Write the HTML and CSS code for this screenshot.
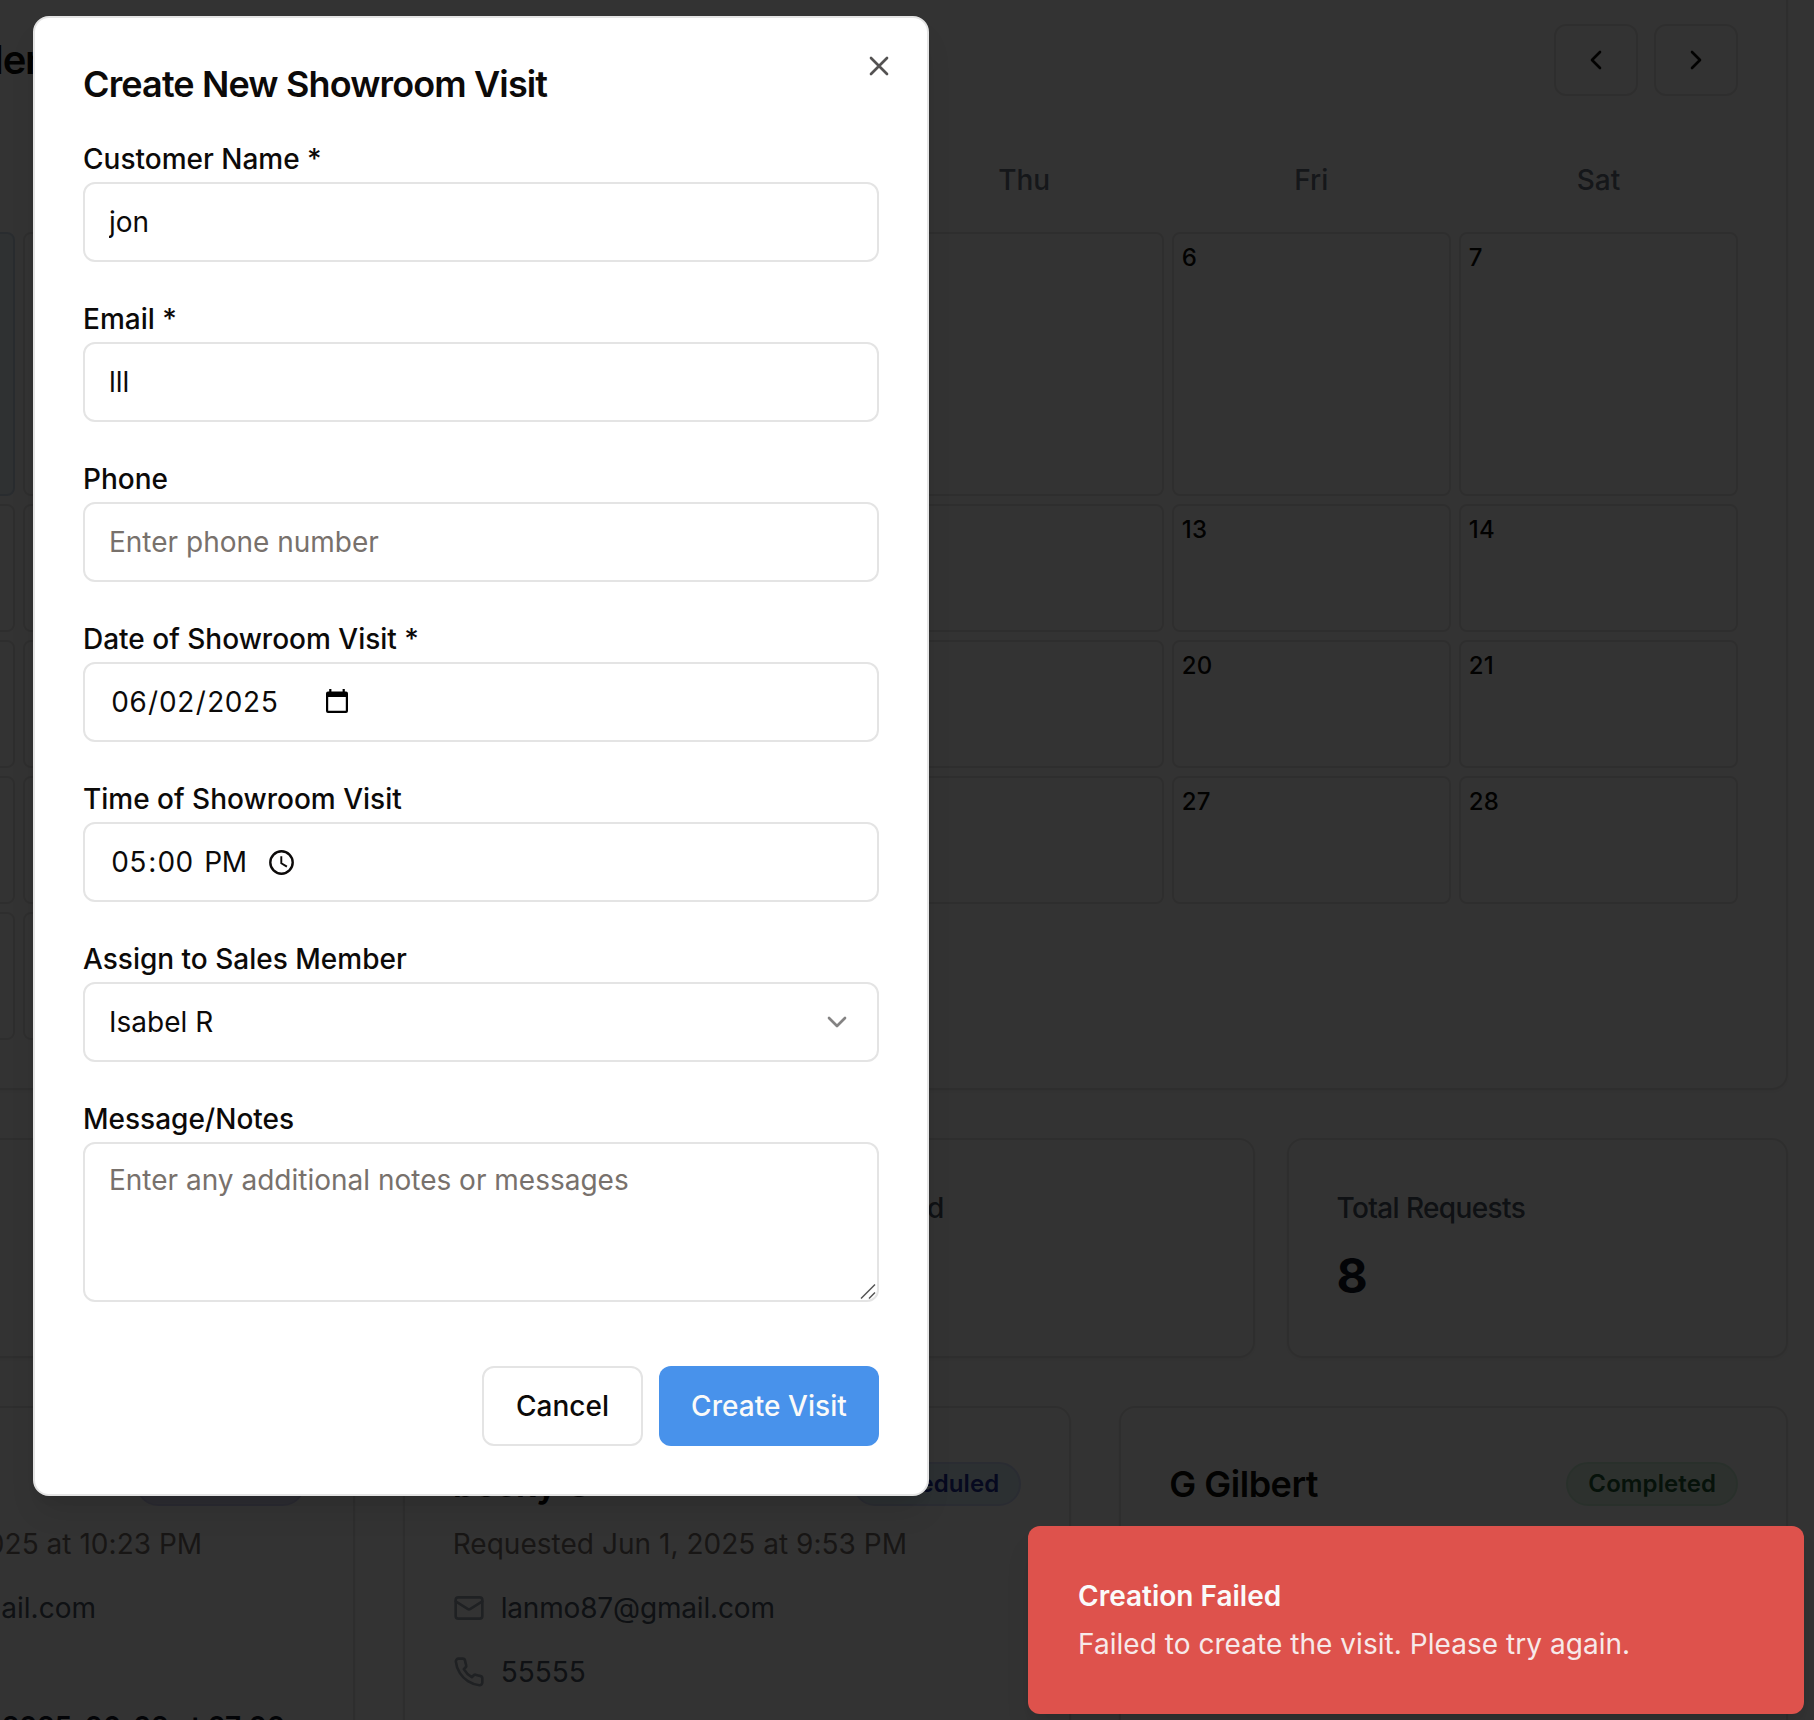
FILE: index.html
```html
<!DOCTYPE html>
<html lang="en">
<head>
<meta charset="utf-8">
<title>Showroom Visits</title>
<link rel="stylesheet" href="styles.css">
</head>
<body>
<svg class="sprite" aria-hidden="true">
  <symbol id="i-mail" viewBox="0 0 24 24"><rect width="20" height="16" x="2" y="4" rx="2"/><path d="m22 7-8.97 5.7a1.94 1.94 0 0 1-2.06 0L2 7"/></symbol>
  <symbol id="i-phone" viewBox="0 0 24 24"><path d="M22 16.92v3a2 2 0 0 1-2.18 2 19.79 19.79 0 0 1-8.63-3.07 19.5 19.5 0 0 1-6-6 19.79 19.79 0 0 1-3.07-8.67A2 2 0 0 1 4.11 2h3a2 2 0 0 1 2 1.72 12.84 12.84 0 0 0 .7 2.81 2 2 0 0 1-.45 2.11L8.09 9.91a16 16 0 0 0 6 6l1.27-1.27a2 2 0 0 1 2.11-.45 12.84 12.84 0 0 0 2.81.7A2 2 0 0 1 22 16.92z"/></symbol>
  <symbol id="i-left" viewBox="0 0 24 24"><path d="m15 18-6-6 6-6"/></symbol>
  <symbol id="i-right" viewBox="0 0 24 24"><path d="m9 18 6-6-6-6"/></symbol>
  <symbol id="i-down" viewBox="0 0 24 24"><path d="m6 9 6 6 6-6"/></symbol>
  <symbol id="i-x" viewBox="0 0 24 24"><path d="M18 6 6 18M6 6l12 12"/></symbol>
</svg>

<main class="page">
  <section class="card calendar">
    <header class="calendar-head">
      <h2 class="calendar-title">Showroom Calendar</h2>
      <div class="calendar-nav">
        <button class="nav-btn"><svg class="icon"><use href="#i-left"/></svg></button>
        <button class="nav-btn"><svg class="icon"><use href="#i-right"/></svg></button>
      </div>
    </header>
    <div class="week">
      <span>Sun</span><span>Mon</span><span>Tue</span><span>Wed</span><span>Thu</span><span>Fri</span><span>Sat</span>
    </div>
    <div class="days">
      <div class="day today">1</div><div class="day">2</div><div class="day">3</div><div class="day">4</div><div class="day">5</div><div class="day">6</div><div class="day">7</div>
      <div class="day">8</div><div class="day">9</div><div class="day">10</div><div class="day">11</div><div class="day">12</div><div class="day">13</div><div class="day">14</div>
      <div class="day">15</div><div class="day">16</div><div class="day">17</div><div class="day">18</div><div class="day">19</div><div class="day">20</div><div class="day">21</div>
      <div class="day">22</div><div class="day">23</div><div class="day">24</div><div class="day">25</div><div class="day">26</div><div class="day">27</div><div class="day">28</div>
      <div class="day">29</div><div class="day">30</div>
    </div>
  </section>

  <section class="stats">
    <div class="card stat"><p class="stat-label">Pending</p><p class="stat-value">0</p></div>
    <div class="card stat"><p class="stat-label">Scheduled</p><p class="stat-value">5</p></div>
    <div class="card stat"><p class="stat-label">Completed</p><p class="stat-value">3</p></div>
    <div class="card stat"><p class="stat-label">Total Requests</p><p class="stat-value">8</p></div>
  </section>

  <section class="requests">
    <article class="card request">
      <div class="request-head"><h3 class="name">Jon</h3><span class="badge indigo">Scheduled</span></div>
      <p class="requested">Requested Jun 1, 2025 at 10:23 PM</p>
      <p class="line mail-line"><svg class="icon"><use href="#i-mail"/></svg><span>jonatan_lee@gmail.com</span></p>
      <p class="line"><svg class="icon"><use href="#i-phone"/></svg><span>55555</span></p>
      <p class="line when"><span>Showroom Visit: 2025-06-02 at 07:00</span></p>
    </article>
    <article class="card request">
      <div class="request-head"><h3 class="name">becky G</h3><span class="badge blue">Scheduled</span></div>
      <p class="requested">Requested Jun 1, 2025 at 9:53 PM</p>
      <p class="line mail"><svg class="icon"><use href="#i-mail"/></svg><span>lanmo87@gmail.com</span></p>
      <p class="line"><svg class="icon"><use href="#i-phone"/></svg><span>55555</span></p>
    </article>
    <article class="card request">
      <div class="request-head"><h3 class="name">G Gilbert</h3><span class="badge green">Completed</span></div>
    </article>
  </section>
</main>

<div class="overlay"></div>

<form class="dialog">
  <button type="button" class="close" aria-label="Close"><svg class="icon"><use href="#i-x"/></svg></button>
  <h1 class="dialog-title">Create New Showroom Visit</h1>
  <div class="field"><label class="label">Customer Name *</label><input class="control" value="jon"></div>
  <div class="field"><label class="label">Email *</label><input class="control" value="lll"></div>
  <div class="field"><label class="label">Phone</label><input class="control" placeholder="Enter phone number"></div>
  <div class="field"><label class="label">Date of Showroom Visit *</label>
    <div class="control picker">
      <span>06</span><span class="slash">/</span><span>02</span><span class="slash">/</span><span>2025</span>
      <svg class="cal-icon" viewBox="0 0 22 24"><path fill-rule="evenodd" d="M3.2 0h2.2v2.4h11.2V0h2.2v2.4H20a2 2 0 0 1 2 2V22a2 2 0 0 1-2 2H2a2 2 0 0 1-2-2V4.400a2 2 0 0 1 2-2h1.200zM2.200 8v13.800h17.600V8z"/></svg>
    </div>
  </div>
  <div class="field"><label class="label">Time of Showroom Visit</label>
    <div class="control picker">
      <span>05</span><span class="colon">:</span><span>00</span><span class="meridiem">PM</span>
      <svg class="clock-icon" viewBox="0 0 25 25"><circle cx="12.500" cy="12.500" r="11.200" stroke-width="2.400"/><path d="M12.300 6.200v7l5.600 3.400" stroke-width="1.900"/></svg>
    </div>
  </div>
  <div class="field"><label class="label">Assign to Sales Member</label>
    <div class="control select"><span>Isabel R</span><svg class="icon chevron"><use href="#i-down"/></svg></div>
  </div>
  <div class="field"><label class="label">Message/Notes</label>
    <div class="notes">
      <textarea class="control area" placeholder="Enter any additional notes or messages"></textarea>
      <svg class="grip" viewBox="0 0 16 16"><path d="M1 15.500 15 1.500M9 15.500l6-6"/></svg>
    </div>
  </div>
  <div class="actions">
    <button type="button" class="btn outline">Cancel</button>
    <button type="button" class="btn primary">Create Visit</button>
  </div>
</form>

<div class="toast">
  <p class="toast-title">Creation Failed</p>
  <p class="toast-text">Failed to create the visit. Please try again.</p>
</div>
</body>
</html>
```
FILE: styles.css
```css
* { box-sizing: border-box; margin: 0; padding: 0; }

body {
  width: 1814px;
  height: 1720px;
  overflow: hidden;
  position: relative;
  background: #fff;
  color: #0c0a09;
  font-family: Inter, "Liberation Sans", sans-serif;
  font-size: 28px;
  line-height: 40px;
}

button, input, textarea { font: inherit; letter-spacing: inherit; color: inherit; }

.sprite { position: absolute; width: 0; height: 0; }

.icon {
  display: block;
  width: 32px;
  height: 32px;
  flex: none;
  fill: none;
  stroke: currentColor;
  stroke-width: 2;
  stroke-linecap: round;
  stroke-linejoin: round;
}

/* Page behind the dialog */
.page {
  width: 2102px;
  margin: -26px 0 0 -314px;
  display: flex;
  flex-direction: column;
  gap: 48px;
}

.card {
  background: #fff;
  border: 2px solid #e7e5e4;
  border-radius: 16px;
  padding: 48px;
  box-shadow: 0 2px 4px rgba(0, 0, 0, 0.05);
}

.calendar { height: 1116px; }
.calendar-head { display: flex; justify-content: space-between; align-items: center; height: 72px; margin-bottom: 48px; }
.calendar-title { font-size: 40px; line-height: 56px; font-weight: 600; letter-spacing: -0.029em; }
.calendar-nav { display: flex; gap: 16px; }
.nav-btn {
  width: 84px;
  height: 72px;
  display: flex;
  align-items: center;
  justify-content: center;
  background: #fff;
  border: 2px solid #e7e5e4;
  border-radius: 12px;
}

.week {
  display: grid;
  grid-template-columns: repeat(7, 1fr);
  gap: 8px;
  padding: 16px 0;
  margin-bottom: 16px;
  text-align: center;
  font-weight: 500;
  color: #6b7280;
}

.days {
  display: grid;
  grid-template-columns: repeat(7, 1fr);
  grid-template-rows: 264px repeat(4, 128px);
  gap: 8px;
}
.day {
  border: 2px solid #e7e5e4;
  border-radius: 8px;
  padding: 8px;
  font-size: 24px;
  line-height: 32px;
  font-weight: 500;
  letter-spacing: 0.01em;
}
.day.today { background: #eaf4fb; border-color: #cddbea; }

.stats { display: grid; grid-template-columns: repeat(4, 1fr); gap: 32px; }
.stat { height: 220px; }
.stat-label { font-weight: 500; color: #4b5563; letter-spacing: -0.022em; }
.stat-value { margin-top: 16px; font-size: 48px; line-height: 64px; font-weight: 700; color: #111827; }

.requests { display: grid; grid-template-columns: repeat(3, 1fr); gap: 48px; }
.request { height: 340px; white-space: nowrap; }
.request-head { display: flex; justify-content: space-between; align-items: center; height: 56px; margin-bottom: 12px; }
.name { font-size: 36px; font-weight: 600; letter-spacing: -0.014em; }
.badge {
  border: 2px solid;
  border-radius: 22px;
  padding: 4px 20px;
  font-size: 24px;
  line-height: 32px;
  font-weight: 600;
  letter-spacing: 0.004em;
}
.indigo { background: #dedff8; border-color: #d2d2f6; color: #3730a3; }
.blue { background: #dceffb; border-color: #d2daf8; color: #1e2f9a; }
.green { background: #dff3e4; border-color: #cdf0d8; color: #1e5a34; }
.requested { color: #78716c; letter-spacing: 0.001em; }
.line { display: flex; align-items: center; gap: 16px; margin-top: 24px; color: #4b5563; }
.line .icon { color: #9ca3af; }
.mail { letter-spacing: -0.006em; }
.mail-line { width: 360px; justify-content: flex-end; }
.when { width: 549px; justify-content: flex-end; margin-top: 15px; color: #111827; font-weight: 600; letter-spacing: -0.01em; }

.overlay { position: absolute; inset: 0; background: rgba(0, 0, 0, 0.8); }

/* Dialog */
.dialog {
  position: absolute;
  left: 33px;
  top: 16px;
  width: 896px;
  height: 1480px;
  padding: 48px;
  background: #fff;
  border: 2px solid #e4e4e4;
  border-radius: 16px;
  box-shadow: 0 20px 30px -6px rgba(0, 0, 0, 0.1), 0 8px 12px -8px rgba(0, 0, 0, 0.1);
  display: flex;
  flex-direction: column;
  gap: 32px;
}
.dialog-title { font-size: 36px; line-height: 36px; font-weight: 600; letter-spacing: -0.024em; }
.close {
  position: absolute;
  right: 32px;
  top: 32px;
  border: 0;
  background: none;
  opacity: 0.7;
}

.label { display: block; height: 48px; padding-top: 1px; line-height: 48px; font-weight: 500; }
.control {
  display: block;
  width: 100%;
  height: 80px;
  padding: 0 24px;
  background: #fff;
  border: 2px solid #e4e4e4;
  border-radius: 12px;
  outline: 0;
}
.control::placeholder { color: #78716c; opacity: 1; }

.picker { display: flex; align-items: center; padding-left: 26px; font-variant-numeric: tabular-nums; letter-spacing: -0.2px; }
.slash { padding: 0 1px; }
.colon { padding: 0 1.5px; }
.meridiem { margin-left: 11px; }
.cal-icon { width: 22px; height: 24px; margin: -2px 0 0 48px; }
.clock-icon { width: 25px; height: 25px; margin-left: 22px; fill: none; stroke: currentColor; }

.select { display: flex; align-items: center; justify-content: space-between; }
.chevron { opacity: 0.5; }

.notes { position: relative; }
.area { height: 160px; padding: 16px 24px; resize: none; }
.grip { position: absolute; right: 3px; bottom: 3px; width: 16px; height: 16px; fill: none; stroke: #555; stroke-width: 1.5; }

.actions { display: flex; justify-content: flex-end; gap: 16px; margin-top: 32px; }
.btn { height: 80px; border: 0; border-radius: 12px; font-weight: 500; }
.outline { width: 161px; background: #fff; border: 2px solid #e4e4e4; }
.primary { width: 220px; background: #4892eb; color: #fafaf9; letter-spacing: 0.002em; }

.toast {
  position: absolute;
  left: 1028px;
  top: 1526px;
  width: 776px;
  height: 188px;
  padding: 50px;
  background: #de524c;
  border-radius: 12px;
  color: #fafafa;
  box-shadow: 0 20px 30px -6px rgba(0, 0, 0, 0.1), 0 8px 12px -8px rgba(0, 0, 0, 0.1);
}
.toast-title { font-weight: 600; }
.toast-text { margin-top: 8px; opacity: 0.9; letter-spacing: 0.0015em; }
```
